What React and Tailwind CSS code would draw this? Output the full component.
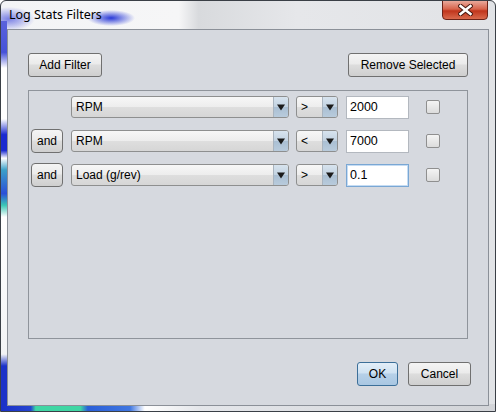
import React, { useState } from "react";

const btn =
  "h-[24px] rounded-[3px] border border-[#707070] bg-[linear-gradient(#f4f4f4,#ebebeb_45%,#dddddd_50%,#cfcfcf)] text-[12px] text-black flex items-center justify-center";

const Arrow = () => (
  <svg width="8" height="7" viewBox="0 0 8 7">
    <path d="M0 0.5h8L4 6.5z" fill="#1a1a1a" />
  </svg>
);

const Combo = ({ value, width }) => (
  <div
    className={`${width} h-[22px] flex rounded-[3px] border border-[#8e8f8f] bg-[linear-gradient(#f7f7f7,#ededed_50%,#dedede_51%,#d6d6d6)] overflow-hidden`}
  >
    <div className="flex-1 flex items-center pl-[4px] text-[12px] text-black">
      {value}
    </div>
    <div className="w-[15px] flex items-center justify-center border-l border-[#a9b4bf] bg-[linear-gradient(#d7e3ee,#c2d2e1_50%,#aabfd3_51%,#b8cbdc)]">
      <Arrow />
    </div>
  </div>
);

const rows = [
  { and: false, field: "RPM", op: ">", value: "2000" },
  { and: true, field: "RPM", op: "<", value: "7000" },
  { and: true, field: "Load (g/rev)", op: ">", value: "0.1", focus: true },
];

export default function App() {
  const [checked, setChecked] = useState([false, false, false]);

  return (
    <div
      className="relative w-[496px] h-[412px] overflow-hidden rounded-t-[6px] border border-[#3a3f46] bg-[#e4e6ea] bg-[radial-gradient(ellipse_26px_12px_at_8px_18px,#5b63e0cc,transparent),radial-gradient(ellipse_24px_8px_at_110px_17px,#2a3ad8,transparent),linear-gradient(90deg,#f3f4f6_0%,#f6f6f7_36%,#d8dadd_40%,#e6e7ea_60%,#e1e3e6_100%)]"
      style={{ fontFamily: '"Liberation Sans", Arial, sans-serif' }}
    >
      {/* left edge glow */}
      <div className="absolute left-0 top-[20px] w-[6px] h-[392px] bg-[linear-gradient(#5a62dc,#4652d8_8%,#ffffff_12%,#ffffff_25%,#1a2ad0_29%,#1a2ad0_33%,#ffffff_35%,#3aa0c8_38%,#2b4fd8_44%,#3bc7b5_47%,#ffffff_50%,#f2f3f5_85%,#1c32c8_88%,#1c32c8_100%)]" />
      {/* bottom edge glow */}
      <div className="absolute left-0 bottom-0 w-[496px] h-[7px] bg-[linear-gradient(90deg,#1a30c8_0%,#2545d0_6%,#3fd6a4_7%,#3fd6a4_16%,#2a5fd8_17.5%,#3f76e0_26%,#ffffff_29%,#e4e6ea_40%,#d2d4d8_100%)]" />

      {/* title */}
      <div
        className="absolute left-[8px] top-[5px] text-[12.5px] text-black"
        style={{ fontFamily: '"Noto Sans", "Open Sans", sans-serif' }}
      >
        Log Stats Filters
      </div>

      {/* close */}
      <div className="absolute right-[7px] top-[-1px] w-[46px] h-[20px] rounded-b-[4px] border border-[#6b2318] bg-[linear-gradient(#e9a99b,#d7634b_45%,#c0351c_55%,#d96a4d)] flex items-center justify-center">
        <svg width="15" height="12" viewBox="0 0 15 12">
          <path
            d="M2.5 2L12.5 10M12.5 2L2.5 10"
            stroke="#4a1a12"
            strokeWidth="4.5"
            strokeLinecap="square"
          />
          <path
            d="M2.5 2L12.5 10M12.5 2L2.5 10"
            stroke="#ffffff"
            strokeWidth="2.5"
            strokeLinecap="square"
          />
        </svg>
      </div>

      {/* content */}
      <div className="absolute left-[6px] top-[28px] w-[482px] h-[377px] border border-[#8b9098] bg-[#d6d9df] flex flex-col">
        <div className="flex justify-between px-[20px] pt-[23px]">
          <button className={`${btn} w-[74px]`}>Add Filter</button>
          <button className={`${btn} w-[120px]`}>Remove Selected</button>
        </div>

        <div className="mx-[20px] mt-[13px] h-[249px] border border-[#8f949b] flex flex-col gap-[12px] pt-[5px]">
          {rows.map((r, i) => (
            <div key={i} className="flex items-center h-[22px] pl-[2px]">
              {r.and ? (
                <button className={`${btn} w-[32px] h-[20px] rounded-[4px]`}>
                  and
                </button>
              ) : (
                <div className="w-[32px]" />
              )}
              <div className="ml-[8px]">
                <Combo value={r.field} width="w-[218px]" />
              </div>
              <div className="ml-[7px]">
                <Combo value={r.op} width="w-[42px]" />
              </div>
              <div
                className={`ml-[8px] w-[63px] h-[23px] bg-white flex items-center pl-[3px] text-[12.5px] text-black border ${
                  r.focus
                    ? "border-[#7aa7d4] shadow-[inset_0_0_0_1px_#c5dcf3]"
                    : "border-[#b3b8bf]"
                }`}
              >
                {r.value}
              </div>
              <button
                onClick={() =>
                  setChecked((c) => c.map((v, j) => (j === i ? !v : v)))
                }
                className="ml-[17px] w-[14px] h-[14px] rounded-[2px] border border-[#8f8f8f] bg-[linear-gradient(#f4f4f4,#dcdcdc)] flex items-center justify-center text-[10px]"
              >
                {checked[i] ? "✓" : ""}
              </button>
            </div>
          ))}
        </div>

        <div className="flex justify-end gap-[10px] pr-[17px] mt-[23px]">
          <button className="h-[24px] w-[41px] rounded-[3px] border border-[#3c6f99] bg-[linear-gradient(#e3eef8,#cfe2f2_45%,#b6d0e8_50%,#a9c7e2)] text-[12px] text-black flex items-center justify-center">
            OK
          </button>
          <button className={`${btn} w-[63px]`}>Cancel</button>
        </div>
      </div>
    </div>
  );
}
